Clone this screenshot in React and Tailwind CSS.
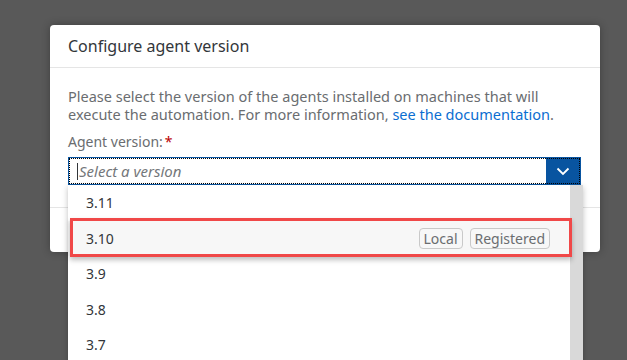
import React from "react";

const versions = ["3.11", "3.10", "3.9", "3.8", "3.7"];

const Badge = ({ children }) => (
  <span className="rounded-[4px] border border-[#c9c9c9] px-[4px] text-[14px] leading-[19px] text-[#6a6d70]">
    {children}
  </span>
);

const App = () => {
  return (
    <div
      className="h-[360px] w-[627px] overflow-hidden bg-[#595959] pl-[50px] pt-[25px]"
      style={{ fontFamily: '"Noto Sans", "Liberation Sans", sans-serif' }}
    >
      <div className="relative flex h-[227px] w-[550px] flex-col rounded-[4px] bg-white shadow-[0_0_8px_rgba(0,0,0,0.3)]">
        {/* Header */}
        <div className="flex h-[43px] items-center border-b border-[#e5e5e5] px-[18px]">
          <h1 className="text-[16px] text-[#32363a]">Configure agent version</h1>
        </div>

        {/* Body */}
        <div className="h-[140px] border-b border-[#e5e5e5] px-[18px] pt-[19px]">
          <p className="text-[14.5px] leading-[18px] text-[#6a6d70]">
            Please select the version of the agents installed on machines that will
            <br />
            execute the automation. For more information,{" "}
            <span className="text-[#0a6ed1]">see the documentation</span>.
          </p>
          <div className="mt-[10px] flex text-[14px] leading-[18px] text-[#6a6d70]">
            Agent version:<span className="ml-[2px] text-[#bb0000]">*</span>
          </div>

          {/* Select input */}
          <div className="relative mt-[6px]">
            <div className="flex h-[28px] w-[513px] border border-[#0854a0] bg-white outline-1 -outline-offset-2 outline-dotted outline-black">
              <div className="flex flex-1 items-center pl-[8px] text-[15px] italic text-[#74777a]">
                <span className="mr-[1px] h-[17px] w-px bg-[#32363a]" />
                Select a version
              </div>
              <div className="flex w-[34px] items-center justify-center bg-[#0854a0]">
                <svg width="14" height="9" viewBox="0 0 14 9" fill="none">
                  <path d="M1.5 1.5 7 7l5.5-5.5" stroke="white" strokeWidth="1.8" />
                </svg>
              </div>
            </div>

            {/* Dropdown list */}
            <div className="absolute left-0 top-[28px] z-10 flex h-[200px] w-[515px] bg-white shadow-[0_2px_6px_rgba(0,0,0,0.25)]">
              <div className="flex flex-1 flex-col">
                {versions.map((v) =>
                  v === "3.10" ? (
                    <div
                      key={v}
                      className="relative flex h-[35.5px] shrink-0 items-center justify-between bg-[#f7f7f7] pl-[18px] pr-[20px] text-[14px] text-[#32363a]"
                    >
                      <span>{v}</span>
                      <div className="flex gap-[7px]">
                        <Badge>Local</Badge>
                        <Badge>Registered</Badge>
                      </div>
                      {/* highlight frame */}
                      <span className="pointer-events-none absolute bottom-[-1px] left-[2px] right-[-2px] top-[-3px] border-[3px] border-[#f04848] shadow-[0_3px_5px_rgba(0,0,0,0.25)]" />
                    </div>
                  ) : (
                    <div
                      key={v}
                      className="flex h-[35.5px] shrink-0 items-center pl-[18px] text-[14px] text-[#32363a]"
                    >
                      {v}
                    </div>
                  )
                )}
              </div>
              <div className="w-[13px] bg-[#d9d9d9]" />
            </div>
          </div>
        </div>

        {/* Footer */}
        <div className="flex-1" />
      </div>
    </div>
  );
};

export default App;
